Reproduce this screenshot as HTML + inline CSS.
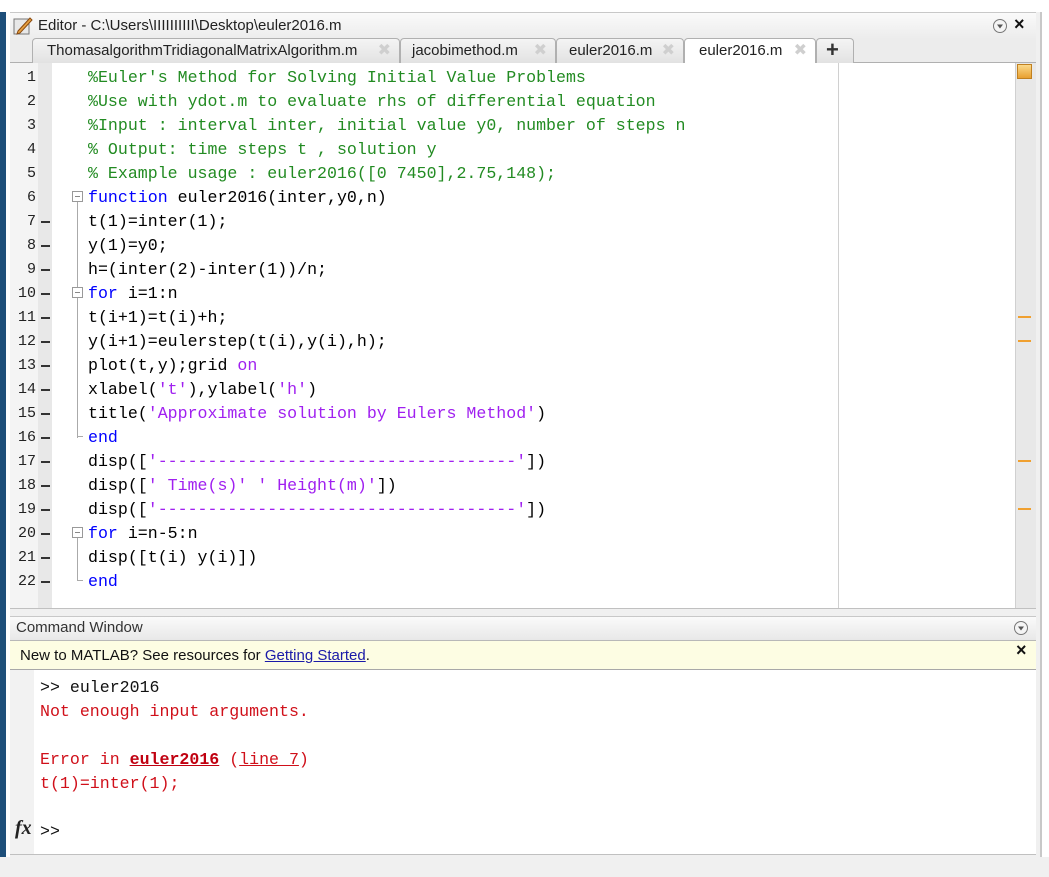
<!DOCTYPE html>
<html><head><meta charset="utf-8"><style>
*{margin:0;padding:0;box-sizing:border-box}
body{width:1049px;height:877px;background:#f0f0f0;position:relative;overflow:hidden;font-family:"Liberation Sans",sans-serif}
.abs{position:absolute}
.mono{font-family:"Liberation Mono",monospace;font-size:16.6px;white-space:pre}
.ln{position:absolute;left:10px;width:26px;text-align:right;font-family:"Liberation Mono",monospace;font-size:15px;color:#222;height:24px;line-height:24px}
.dash{position:absolute;left:41px;width:9px;height:1.5px;background:#333;margin-top:11px}
.cl{position:absolute;left:88px;height:24px;line-height:24px;color:#000}
.c{color:#228b22}.k{color:#0000ff}.s{color:#a020f0}
.tab{position:absolute;top:38px;height:25px;border:1px solid #b0b0b0;border-bottom:none;border-radius:4px 4px 0 0;background:linear-gradient(#f4f4f4,#e2e2e2);font-size:15px;color:#222;line-height:24px;padding-left:14px}
.tab .x{position:absolute;right:8px;top:0;color:#cfcfcf;font-size:16px}
.fold{position:absolute;left:72px;width:11px;height:11px;border:1px solid #999;background:#fff}
.fold:after{content:"";position:absolute;left:2px;top:4px;width:5px;height:1px;background:#888}
.mk{position:absolute;left:1018px;width:13px;height:2px;background:#f0a030}
</style></head><body>
<div class="abs" style="left:0;top:0;width:1049px;height:12px;background:#fff"></div>
<div class="abs" style="left:0;top:12px;width:6px;height:845px;background:#1e4f7a"></div>
<div class="abs" style="left:6px;top:12px;width:4px;height:845px;background:#fff"></div>
<div class="abs" style="left:1040px;top:12px;width:2px;height:845px;background:#c8c8c8"></div>
<div class="abs" style="left:1042px;top:12px;width:7px;height:845px;background:#fff"></div>
<div class="abs" style="left:10px;top:12px;width:1026px;height:27px;background:linear-gradient(#fafafa,#ececec);border-top:1px solid #c8c8c8"></div>
<svg class="abs" style="left:13px;top:16px" width="20" height="20" viewBox="0 0 20 20"><rect x="1" y="3" width="15" height="15" fill="#e8e8e8" stroke="#777"/><path d="M5 15 L17 2 L19 4 L7 17 L4 18 Z" fill="#e6a040" stroke="#8a4a10" stroke-width="1"/></svg>
<div class="abs" style="left:38px;top:17px;font-size:15px;color:#222">Editor - C:\Users\IIIIIIIIII\Desktop\euler2016.m</div>
<svg class="abs" style="left:992px;top:18px" width="16" height="16"><circle cx="8" cy="8" r="6.5" fill="#f4f4f4" stroke="#777"/><path d="M5 6.5 L11 6.5 L8 10.5Z" fill="#555"/></svg>
<div class="abs" style="left:1014px;top:14px;font-size:18px;font-weight:bold;color:#111">×</div>
<div class="abs" style="left:10px;top:38px;width:1026px;height:25px;background:#ececec;border-bottom:1px solid #b0b0b0"></div>
<div class="tab" style="left:32px;width:368px">ThomasalgorithmTridiagonalMatrixAlgorithm.m<span class="x">✖</span></div>
<div class="tab" style="left:400px;width:156px;padding-left:11px">jacobimethod.m<span class="x">✖</span></div>
<div class="tab" style="left:556px;width:128px;padding-left:12px">euler2016.m<span class="x">✖</span></div>
<div class="tab" style="left:684px;width:132px;background:#fff;height:26px;padding-left:14px">euler2016.m<span class="x">✖</span></div>
<div class="tab" style="left:816px;width:38px;padding-left:9px;font-size:22px;font-weight:bold;line-height:22px;color:#333">+</div>
<div class="abs" style="left:10px;top:63px;width:1026px;height:546px;background:#fff;border-bottom:1px solid #c0c0c0"></div>
<div class="abs" style="left:10px;top:63px;width:28px;height:545px;background:#f4f4f4"></div>
<div class="abs" style="left:38px;top:63px;width:14px;height:545px;background:#e8e8e8"></div>
<div class="abs" style="left:838px;top:63px;width:1px;height:545px;background:#d0d0d0"></div>
<div class="abs" style="left:1015px;top:63px;width:21px;height:545px;background:#e8e8e8;border-left:1px solid #d0d0d0"></div>
<div class="abs" style="left:1017px;top:64px;width:15px;height:15px;background:linear-gradient(#fbd98a,#e8a030);border:1px solid #c08020"></div>
<div class="mk" style="top:316px"></div><div class="mk" style="top:340px"></div><div class="mk" style="top:460px"></div><div class="mk" style="top:508px"></div>
<div class="abs" style="left:77px;top:202px;width:1px;height:236px;background:#aaa"></div>
<div class="abs" style="left:77px;top:436px;width:6px;height:1px;background:#aaa"></div>
<div class="abs" style="left:77px;top:538px;width:1px;height:42px;background:#aaa"></div>
<div class="abs" style="left:77px;top:580px;width:6px;height:1px;background:#aaa"></div>
<div class="fold" style="top:191px"></div><div class="fold" style="top:287px"></div><div class="fold" style="top:527px"></div>
<div class="mono">
<div class="ln" style="top:66px">1</div><div class="cl c" style="top:66px">%Euler's Method for Solving Initial Value Problems</div>
<div class="ln" style="top:90px">2</div><div class="cl c" style="top:90px">%Use with ydot.m to evaluate rhs of differential equation</div>
<div class="ln" style="top:114px">3</div><div class="cl c" style="top:114px">%Input : interval inter, initial value y0, number of steps n</div>
<div class="ln" style="top:138px">4</div><div class="cl c" style="top:138px">% Output: time steps t , solution y</div>
<div class="ln" style="top:162px">5</div><div class="cl c" style="top:162px">% Example usage : euler2016([0 7450],2.75,148);</div>
<div class="ln" style="top:186px">6</div><div class="cl" style="top:186px"><span class="k">function</span> euler2016(inter,y0,n)</div>
<div class="ln" style="top:210px">7</div><div class="dash" style="top:210px"></div><div class="cl" style="top:210px">t(1)=inter(1);</div>
<div class="ln" style="top:234px">8</div><div class="dash" style="top:234px"></div><div class="cl" style="top:234px">y(1)=y0;</div>
<div class="ln" style="top:258px">9</div><div class="dash" style="top:258px"></div><div class="cl" style="top:258px">h=(inter(2)-inter(1))/n;</div>
<div class="ln" style="top:282px">10</div><div class="dash" style="top:282px"></div><div class="cl" style="top:282px"><span class="k">for</span> i=1:n</div>
<div class="ln" style="top:306px">11</div><div class="dash" style="top:306px"></div><div class="cl" style="top:306px">t(i+1)=t(i)+h;</div>
<div class="ln" style="top:330px">12</div><div class="dash" style="top:330px"></div><div class="cl" style="top:330px">y(i+1)=eulerstep(t(i),y(i),h);</div>
<div class="ln" style="top:354px">13</div><div class="dash" style="top:354px"></div><div class="cl" style="top:354px">plot(t,y);grid <span class="s">on</span></div>
<div class="ln" style="top:378px">14</div><div class="dash" style="top:378px"></div><div class="cl" style="top:378px">xlabel(<span class="s">'t'</span>),ylabel(<span class="s">'h'</span>)</div>
<div class="ln" style="top:402px">15</div><div class="dash" style="top:402px"></div><div class="cl" style="top:402px">title(<span class="s">'Approximate solution by Eulers Method'</span>)</div>
<div class="ln" style="top:426px">16</div><div class="dash" style="top:426px"></div><div class="cl" style="top:426px"><span class="k">end</span></div>
<div class="ln" style="top:450px">17</div><div class="dash" style="top:450px"></div><div class="cl" style="top:450px">disp([<span class="s">'------------------------------------'</span>])</div>
<div class="ln" style="top:474px">18</div><div class="dash" style="top:474px"></div><div class="cl" style="top:474px">disp([<span class="s">' Time(s)'</span> <span class="s">' Height(m)'</span>])</div>
<div class="ln" style="top:498px">19</div><div class="dash" style="top:498px"></div><div class="cl" style="top:498px">disp([<span class="s">'------------------------------------'</span>])</div>
<div class="ln" style="top:522px">20</div><div class="dash" style="top:522px"></div><div class="cl" style="top:522px"><span class="k">for</span> i=n-5:n</div>
<div class="ln" style="top:546px">21</div><div class="dash" style="top:546px"></div><div class="cl" style="top:546px">disp([t(i) y(i)])</div>
<div class="ln" style="top:570px">22</div><div class="dash" style="top:570px"></div><div class="cl" style="top:570px"><span class="k">end</span></div>
</div>
<div class="abs" style="left:10px;top:616px;width:1026px;height:25px;background:linear-gradient(#fafafa,#e8e8e8);border-top:1px solid #c8c8c8;border-bottom:1px solid #b8b8b8"></div>
<div class="abs" style="left:16px;top:619px;font-size:15px;color:#333">Command Window</div>
<svg class="abs" style="left:1013px;top:620px" width="16" height="16"><circle cx="8" cy="8" r="6.5" fill="#f4f4f4" stroke="#777"/><path d="M5 6.5 L11 6.5 L8 10.5Z" fill="#555"/></svg>
<div class="abs" style="left:10px;top:641px;width:1026px;height:29px;background:#fdfde3;border-bottom:1px solid #a8a8a8"></div>
<div class="abs" style="left:20px;top:647px;font-size:15px;color:#111">New to MATLAB? See resources for <span style="color:#1a1aa8;text-decoration:underline">Getting Started</span>.</div>
<div class="abs" style="left:1016px;top:640px;font-size:18px;font-weight:bold;color:#111">×</div>
<div class="abs" style="left:10px;top:670px;width:1026px;height:185px;background:#fff;border-bottom:1px solid #c0c0c0"></div>
<div class="abs" style="left:10px;top:670px;width:24px;height:184px;background:#f2f2f2"></div>
<div class="mono">
<div class="abs" style="left:40px;top:676px;line-height:24px;color:#111">&gt;&gt; euler2016</div>
<div class="abs" style="left:40px;top:700px;line-height:24px;color:#d0101a">Not enough input arguments.</div>
<div class="abs" style="left:40px;top:748px;line-height:24px;color:#d0101a">Error in <b style="text-decoration:underline;color:#c00010">euler2016</b> (<span style="text-decoration:underline">line 7</span>)</div>
<div class="abs" style="left:40px;top:772px;line-height:24px;color:#d0101a">t(1)=inter(1);</div>
<div class="abs" style="left:40px;top:820px;line-height:24px;color:#111">&gt;&gt;</div>
</div>
<div class="abs" style="left:15px;top:817px;font-family:'Liberation Serif',serif;font-style:italic;font-weight:bold;font-size:20px;color:#222">fx</div>
</body></html>
